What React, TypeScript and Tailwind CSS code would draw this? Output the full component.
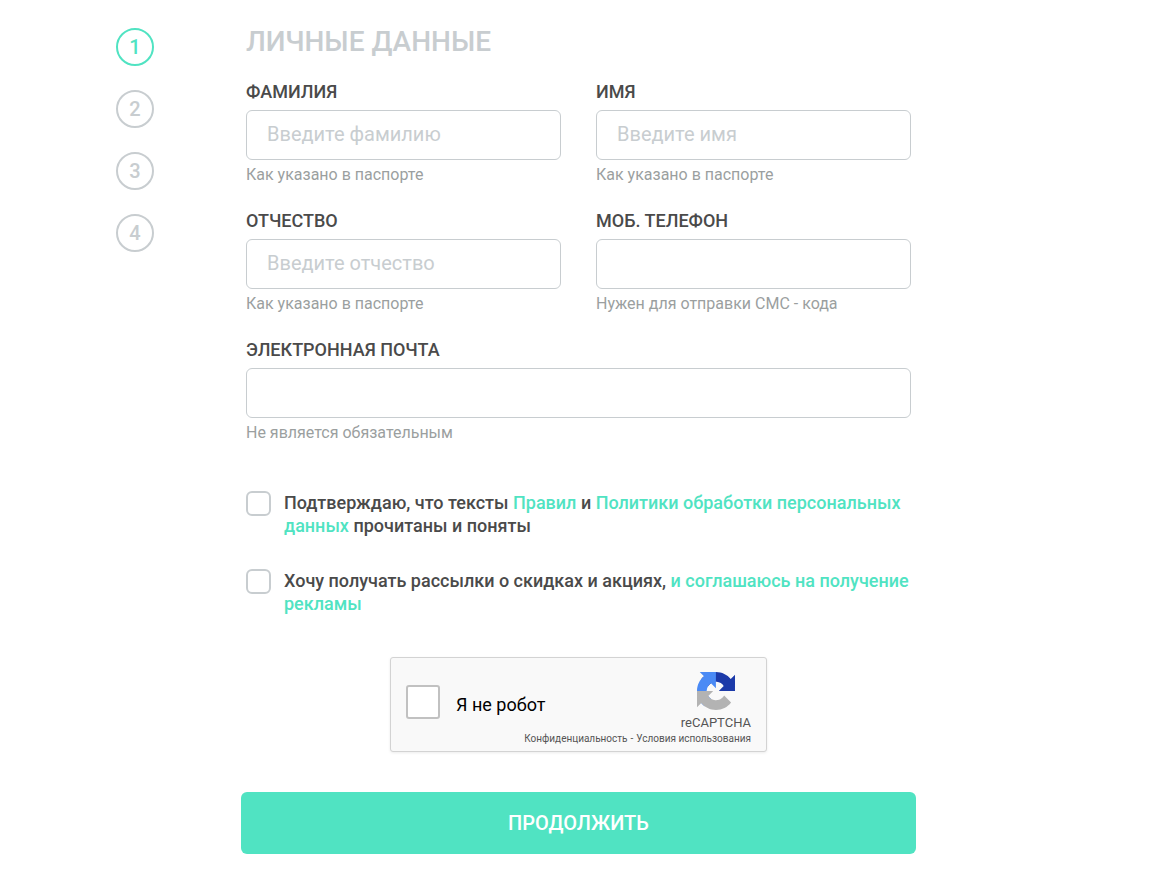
import { useState } from "react";
import clsx from "clsx";

interface FieldProps {
  id: string;
  label: string;
  hint: string;
  type?: string;
  placeholder?: string;
  className?: string;
}

interface ConsentProps {
  id: string;
  className?: string;
  children: React.ReactNode;
}

const STEPS = [1, 2, 3, 4];

function Field({ id, label, hint, type = "text", placeholder, className }: FieldProps) {
  return (
    <div className={className}>
      <label htmlFor={id} className="block text-lg leading-6 font-medium text-[#4a4a4a] uppercase">
        {label}
      </label>
      <input
        id={id}
        type={type}
        placeholder={placeholder}
        aria-describedby={`${id}-hint`}
        className="block mt-1.5 w-full h-[50px] px-5 pb-0.5 bg-white border border-[#c8cdd0] rounded-md text-xl text-[#4a4a4a] placeholder:text-[#c8cdd0] focus:outline-none focus:border-[#50e3c2]"
      />
      <p id={`${id}-hint`} className="mt-[3px] text-base leading-6 text-[#9b9f9f]">
        {hint}
      </p>
    </div>
  );
}

function Consent({ id, className, children }: ConsentProps) {
  return (
    <div className={clsx("flex items-start gap-[13px]", className)}>
      <input
        id={id}
        type="checkbox"
        className="shrink-0 size-[25px] appearance-none bg-white border-2 border-[#c8cdd0] rounded-md checked:bg-[#50e3c2] checked:border-[#50e3c2]"
      />
      <label htmlFor={id} className="text-lg leading-[23px] font-medium text-[#4a4a4a]">
        {children}
      </label>
    </div>
  );
}

function CaptchaLogo() {
  return (
    <svg viewBox="0 0 64 64" className="size-[38px]" aria-hidden="true">
      <path
        fill="#1c3aa9"
        d="M64 31.955l-.033-1.37V4.687l-7.16 7.16C50.948 4.674 42.033.093 32.05.093c-10.4 0-19.622 4.96-25.458 12.64l11.736 11.86a15.55 15.55 0 0 1 4.754-5.334c2.05-1.6 4.952-2.906 8.968-2.906.485 0 .86.057 1.135.163 4.976.393 9.288 3.14 11.828 7.124l-8.307 8.307L64 31.953"
      />
      <path
        fill="#4a8af5"
        d="M31.862.094l-1.37.033H4.594l7.16 7.16C4.58 13.147 0 22.06 0 32.046c0 10.4 4.96 19.622 12.64 25.458L24.5 45.768a15.55 15.55 0 0 1-5.334-4.754c-1.6-2.05-2.906-4.952-2.906-8.968 0-.485.057-.86.163-1.135.393-4.976 3.14-9.288 7.124-11.828l8.307 8.307L31.86.095"
      />
      <path
        fill="#b3b3b3"
        d="M.001 32.045l.033 1.37v25.898l7.16-7.16c5.86 7.173 14.774 11.754 24.76 11.754 10.4 0 19.622-4.96 25.458-12.64l-11.736-11.86a15.55 15.55 0 0 1-4.754 5.334c-2.05 1.6-4.952 2.906-8.968 2.906-.485 0-.86-.057-1.135-.163-4.976-.393-9.288-3.14-11.828-7.124l8.307-8.307c-10.522.04-22.4.066-27.295-.005"
      />
    </svg>
  );
}

function Captcha() {
  return (
    <div className="mx-auto w-full max-w-[377px] pt-3.5 pb-1 px-[15px] bg-[#f9f9f9] border border-[#d3d3d3] rounded-[3px] shadow-[0_1px_3px_rgba(0,0,0,0.08)]">
      <div className="flex items-center justify-between">
        <div className="flex items-center gap-4">
          <input
            id="captcha"
            type="checkbox"
            className="size-[34px] appearance-none bg-white border-2 border-[#c1c1c1] rounded-[3px] checked:bg-[#4a8af5]"
          />
          <label htmlFor="captcha" className="pt-1.5 text-lg leading-6 text-black">
            Я не робот
          </label>
        </div>
        <div className="flex flex-col items-center gap-[5px]">
          <CaptchaLogo />
          <span className="text-[13px] leading-4 text-[#555555]">reCAPTCHA</span>
        </div>
      </div>
      <div className="flex justify-end gap-[3px] text-[10px] leading-4 text-[#555555]">
        <a href="#privacy">Конфиденциальность</a>
        <span>-</span>
        <a href="#terms">Условия использования</a>
      </div>
    </div>
  );
}

export default function App() {
  const [step, setStep] = useState(1);

  return (
    <main className="flex items-start gap-[87px] pt-6 pb-6 pl-[116px] pr-6 bg-white font-[Roboto,sans-serif]">
      <nav aria-label="Шаги" className="flex flex-col gap-6 pt-1">
        {STEPS.map((n) => (
          <button
            key={n}
            type="button"
            onClick={() => setStep(n)}
            className={clsx(
              "flex items-center justify-center size-[38px] rounded-full border-2 text-xl font-medium",
              n === step ? "border-[#50e3c2] text-[#50e3c2]" : "border-[#c8cdd0] text-[#c8cdd0]",
            )}
          >
            {n}
          </button>
        ))}
      </nav>

      <form onSubmit={(e) => e.preventDefault()} className="flex-1 max-w-[675px]">
        <div className="px-[5px]">
          <h1 className="text-[28px] leading-9 font-medium text-[#c8cdd0] uppercase">Личные данные</h1>
          <div className="mt-5 grid grid-cols-2 gap-x-[35px] gap-y-[22px]">
            <Field id="surname" label="Фамилия" placeholder="Введите фамилию" hint="Как указано в паспорте" />
            <Field id="name" label="Имя" placeholder="Введите имя" hint="Как указано в паспорте" />
            <Field id="patronymic" label="Отчество" placeholder="Введите отчество" hint="Как указано в паспорте" />
            <Field id="phone" type="tel" label="Моб. телефон" hint="Нужен для отправки СМС - кода" />
            <Field id="email" type="email" label="Электронная почта" hint="Не является обязательным" className="col-span-2" />
          </div>

          <Consent id="rules" className="mt-[46px]">
            Подтверждаю, что тексты{" "}
            <a href="#rules" className="text-[#50e3c2]">Правил</a> и{" "}
            <a href="#policy" className="text-[#50e3c2]">Политики обработки персональных данных</a>{" "}
            прочитаны и поняты
          </Consent>
          <Consent id="promo" className="mt-8 mb-[42px]">
            Хочу получать рассылки о скидках и акциях,{" "}
            <a href="#ads" className="text-[#50e3c2]">и соглашаюсь на получение рекламы</a>
          </Consent>
        </div>

        <Captcha />

        <button
          type="submit"
          className="mt-10 w-full h-[62px] rounded-md bg-[#50e3c2] text-xl font-medium text-white uppercase"
        >
          Продолжить
        </button>
      </form>
    </main>
  );
}
